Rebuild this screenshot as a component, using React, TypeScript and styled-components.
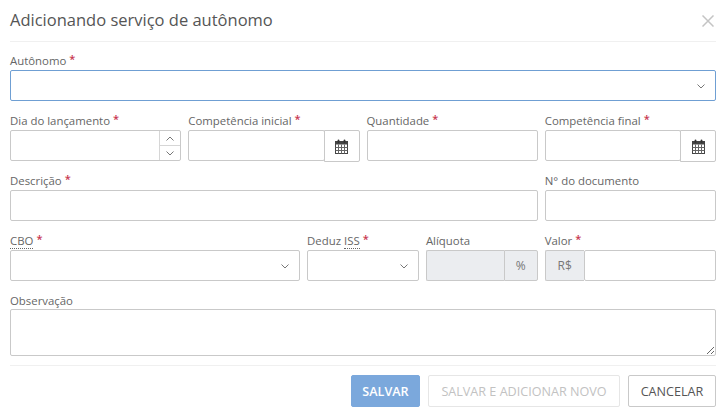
import styled, { createGlobalStyle } from "styled-components";

const GlobalStyle = createGlobalStyle`
	html, body {
		margin: 0;
		padding: 0;
		background: #fff;
		font-family: "Open Sans", "Liberation Sans", sans-serif;
	}
`;

const Chevron = ({ up }: { up?: boolean }) => (
	<svg width="8" height="5" viewBox="0 0 8 5" fill="none">
		<path
			d={up ? "M0.5 4.5 L4 1 L7.5 4.5" : "M0.5 0.5 L4 4 L7.5 0.5"}
			stroke="#777"
			strokeWidth="1"
		/>
	</svg>
);

const CalendarIcon = () => (
	<svg width="13" height="15" viewBox="0 0 13 15" fill="none">
		<rect x="0.5" y="2.5" width="12" height="12" fill="#fff" stroke="#444" />
		<rect x="0.5" y="2.5" width="12" height="3" fill="#444" />
		<path
			d="M3.5 5.5V14.5M6.5 5.5V14.5M9.5 5.5V14.5M0.5 8.5H12.5M0.5 11.5H12.5"
			stroke="#666"
			strokeWidth="1"
		/>
		<rect x="2.6" y="0.5" width="1.8" height="3.5" rx="0.9" fill="#333" />
		<rect x="8.6" y="0.5" width="1.8" height="3.5" rx="0.9" fill="#333" />
	</svg>
);

const Field = ({
	label,
	required,
	abbr,
	span,
	children,
}: {
	label: string;
	required?: boolean;
	abbr?: string;
	span: number;
	children: React.ReactNode;
}) => (
	<FieldBox $span={span}>
		<Label>
			{label}
			{abbr && (
				<>
					{label && " "}
					<Abbr>{abbr}</Abbr>
				</>
			)}
			{required && <Star>*</Star>}
		</Label>
		{children}
	</FieldBox>
);

const SelectBox = ({ focused }: { focused?: boolean }) => (
	<SelectControl $focused={focused}>
		<Chevron />
	</SelectControl>
);

const DateInput = () => (
	<InputGroup>
		<GroupInput />
		<CalendarButton type="button">
			<CalendarIcon />
		</CalendarButton>
	</InputGroup>
);

export default function App() {
	return (
		<Modal>
			<GlobalStyle />
			<Header>
				<Title>Adicionando serviço de autônomo</Title>
				<CloseButton aria-label="Fechar">
					<svg width="12" height="12" viewBox="0 0 12 12" fill="none">
						<path d="M0.5 0.5L11.5 11.5M11.5 0.5L0.5 11.5" stroke="#c4c4c4" strokeWidth="1.5" />
					</svg>
				</CloseButton>
			</Header>
			<Form>
				<Field label="Autônomo" required span={12}>
					<SelectBox focused />
				</Field>

				<Field label="Dia do lançamento" required span={3}>
					<InputGroup>
						<GroupInput />
						<Spinner>
							<SpinnerButton>
								<Chevron up />
							</SpinnerButton>
							<SpinnerButton>
								<Chevron />
							</SpinnerButton>
						</Spinner>
					</InputGroup>
				</Field>
				<Field label="Competência inicial" required span={3}>
					<DateInput />
				</Field>
				<Field label="Quantidade" required span={3}>
					<Input />
				</Field>
				<Field label="Competência final" required span={3}>
					<DateInput />
				</Field>

				<Field label="Descrição" required span={9}>
					<Input />
				</Field>
				<Field label="N° do documento" span={3}>
					<Input />
				</Field>

				<Field label="" abbr="CBO" required span={5}>
					<SelectBox />
				</Field>
				<Field label="Deduz" abbr="ISS" required span={2}>
					<SelectBox />
				</Field>
				<Field label="Alíquota" span={2}>
					<InputGroup>
						<GroupInput disabled />
						<Addon $side="right">%</Addon>
					</InputGroup>
				</Field>
				<Field label="Valor" required span={3}>
					<InputGroup>
						<Addon $side="left">R$</Addon>
						<GroupInput />
					</InputGroup>
				</Field>

				<Field label="Observação" span={12}>
					<TextArea />
				</Field>
			</Form>
			<Footer>
				<PrimaryButton type="button">SALVAR</PrimaryButton>
				<GhostButton type="button">SALVAR E ADICIONAR NOVO</GhostButton>
				<CancelButton type="button">CANCELAR</CancelButton>
			</Footer>
		</Modal>
	);
}

const Modal = styled.div`
	width: 724px;
	height: 411px;
	padding: 0 8px 0 10px;
	box-sizing: border-box;
	overflow: hidden;
	background: #fff;
`;

const Header = styled.div`
	height: 38px;
	padding-bottom: 3px;
	display: flex;
	align-items: center;
	justify-content: space-between;
	border-bottom: 1px solid #f0f0f0;
	box-sizing: content-box;
`;

const Title = styled.h1`
	margin: 0;
	font-size: 16.5px;
	font-weight: 400;
	color: #555;
`;

const CloseButton = styled.span`
	display: flex;
	margin-right: 2px;
	margin-top: 3px;
`;

const Form = styled.div`
	display: grid;
	grid-template-columns: repeat(12, 1fr);
	column-gap: 7px;
	row-gap: 11px;
	padding-top: 10px;
`;

const FieldBox = styled.div<{ $span: number }>`
	grid-column: span ${(p) => p.$span};
	min-width: 0;
`;

const Label = styled.label`
	display: block;
	height: 18px;
	line-height: 18px;
	font-size: 11.4px;
	color: #666;
	white-space: nowrap;
`;

const Abbr = styled.span`
	border-bottom: 1px dotted #666;
`;

const Star = styled.span`
	color: #c8364f;
	margin-left: 3px;
	font-size: 11px;
	font-weight: 600;
	position: relative;
	top: -2px;
`;

const Input = styled.input`
	display: block;
	width: 100%;
	height: 31px;
	box-sizing: border-box;
	border: 1px solid #c9c9c9;
	border-radius: 2px;
	background: #fff;
	outline: none;
`;

const SelectControl = styled.div<{ $focused?: boolean }>`
	height: 31px;
	box-sizing: border-box;
	border: 1px solid ${(p) => (p.$focused ? "#6f9fd3" : "#c9c9c9")};
	border-radius: 2px;
	display: flex;
	align-items: center;
	justify-content: flex-end;
	padding-right: 10px;
	padding-top: 2px;
`;

const InputGroup = styled.div`
	display: flex;
	height: 31px;
`;

const GroupInput = styled.input`
	flex: 1;
	min-width: 0;
	height: 100%;
	box-sizing: border-box;
	border: 1px solid #c9c9c9;
	border-radius: 2px;
	background: #fff;
	outline: none;

	&:disabled {
		background: #ebedf0;
		border-radius: 2px 0 0 2px;
		border-right: none;
	}
`;

const Spinner = styled.div`
	width: 21px;
	margin: 1px 1px 1px -22px;
	display: flex;
	flex-direction: column;
	box-sizing: border-box;
	border-left: 1px solid #d6d6d6;
	position: relative;
`;

const SpinnerButton = styled.div`
	flex: 1;
	display: flex;
	align-items: center;
	justify-content: center;

	& + & {
		border-top: 1px solid #d6d6d6;
	}
`;

const CalendarButton = styled.button`
	width: 36px;
	height: 32px;
	margin-left: -1px;
	padding: 0;
	flex: none;
	display: flex;
	align-items: center;
	justify-content: center;
	background: #fff;
	border: 1px solid #c9c9c9;
	border-radius: 0 2px 2px 0;
`;

const Addon = styled.span<{ $side: "left" | "right" }>`
	flex: none;
	width: ${(p) => (p.$side === "left" ? "39px" : "34px")};
	box-sizing: border-box;
	display: flex;
	align-items: center;
	justify-content: center;
	font-size: 12px;
	color: #777;
	background: #ebedf0;
	border: 1px solid #c9c9c9;
	border-radius: ${(p) => (p.$side === "left" ? "2px 0 0 2px" : "0 2px 2px 0")};
	${(p) => (p.$side === "left" ? "border-right: none;" : "")}
`;

const TextArea = styled.textarea`
	display: block;
	width: 100%;
	height: 47px;
	box-sizing: border-box;
	border: 1px solid #c9c9c9;
	border-radius: 2px;
	margin: -1px 0 0;
	outline: none;
`;

const Footer = styled.div`
	margin-top: 9px;
	padding-top: 9px;
	border-top: 1px solid #f0f0f0;
	display: flex;
	justify-content: flex-end;
	gap: 8px;
`;

const BaseButton = styled.button`
	height: 32px;
	box-sizing: border-box;
	padding: 0;
	border-radius: 2px;
	font-family: inherit;
	font-size: 12.6px;
	background: #fff;
`;

const PrimaryButton = styled(BaseButton)`
	width: 69px;
	border: 1px solid #7ba8dc;
	background: #7ba8dc;
	color: #fff;
	font-weight: 600;
`;

const GhostButton = styled(BaseButton)`
	width: 192px;
	border: 1px solid #e6e6e6;
	color: #c2c2c2;
`;

const CancelButton = styled(BaseButton)`
	width: 88px;
	border: 1px solid #c9c9c9;
	color: #555;
`;
